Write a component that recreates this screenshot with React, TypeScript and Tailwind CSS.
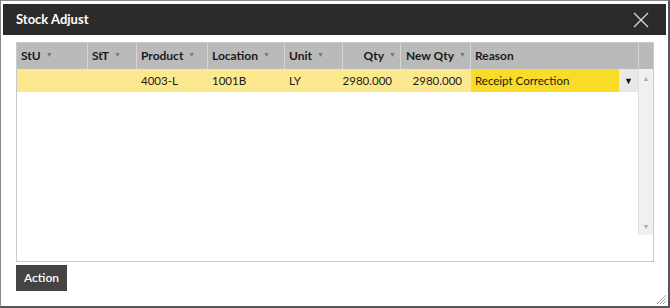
import React from "react";

const cols = [
  { label: "StU", w: 71, align: "left", sort: true },
  { label: "StT", w: 49, align: "left", sort: true },
  { label: "Product", w: 71, align: "left", sort: true },
  { label: "Location", w: 77, align: "left", sort: true },
  { label: "Unit", w: 58, align: "left", sort: true },
  { label: "Qty", w: 58, align: "right", sort: true },
  { label: "New Qty", w: 70, align: "right", sort: true },
  { label: "Reason", w: 168, align: "left", sort: false },
];

const row = ["", "", "4003-L", "1001B", "LY", "2980.000", "2980.000"];

function SortMark() {
  return <span className="ml-[5px] text-[7px] text-[#777] relative top-[-2px]">▼</span>;
}

export default function App() {
  return (
    <div
      className="w-[670px] h-[308px] bg-white border border-[#888] border-r-2 border-b-2 border-r-[#555] border-b-[#555] px-[2px] pt-[3px] flex flex-col relative"
      style={{ fontFamily: "Lato, 'Open Sans', sans-serif" }}
    >
      <div className="h-[31px] bg-[#2b2b2b] flex items-center justify-between pl-[13px] pr-[17px] shrink-0">
        <span className="text-white text-[13px] font-bold">Stock Adjust</span>
        <svg width="16" height="16" viewBox="0 0 16 16">
          <path d="M1 1L15 15M15 1L1 15" stroke="#d6d6d6" strokeWidth="1.4" />
        </svg>
      </div>
      <div className="ml-[13px] mt-[7px] w-[638px] h-[220px] border border-[#c9c9c9] flex flex-col">
        <div className="flex h-[26px] bg-[#bababa] text-[12px] font-bold text-[#1a1a1a]">
          {cols.map((c, i) => (
            <div
              key={i}
              style={{ width: c.w }}
              className={`h-full flex items-center border-r border-[#d6d6d6] px-[4px] ${
                c.align === "right" ? "justify-end pr-[4px]" : ""
              }`}
            >
              <span>{c.label}</span>
              {c.sort && <SortMark />}
            </div>
          ))}
          <div className="flex-1" />
        </div>
        <div className="flex flex-1 min-h-0">
          <div className="flex-1 flex flex-col">
            <div className="flex h-[23px] bg-[#fce98f] text-[11.5px] text-[#1a1a1a]">
              {row.map((v, i) => (
                <div
                  key={i}
                  style={{ width: cols[i].w }}
                  className={`h-full flex items-center px-[4px] ${
                    cols[i].align === "right" ? "justify-end pr-[9px]" : ""
                  }`}
                >
                  {v}
                </div>
              ))}
              <div className="w-[148px] h-full bg-[#f8dc27] flex items-center pl-[4px]">
                Receipt Correction
              </div>
              <div className="w-[19px] h-full bg-[#e8e8e8] flex items-center justify-center text-[9px] text-[#111]">
                ▼
              </div>
            </div>
          </div>
          <div className="w-[15px] h-[166px] bg-[#f0f0f0] border-l border-[#e2e2e2] flex flex-col justify-between items-center py-[4px] text-[7px] text-[#aaa]">
            <span>▲</span>
            <span>▼</span>
          </div>
        </div>
      </div>
      <div className="ml-[13px] mt-[3px]">
        <button className="w-[51px] h-[26px] bg-[#444] text-white text-[12px] font-semibold flex items-center justify-center">
          Action
        </button>
      </div>
      <svg className="absolute right-[1px] bottom-[1px]" width="13" height="13" viewBox="0 0 13 13">
        <path d="M12 3L3 12M12 6L6 12M12 9L9 12" stroke="#999" strokeWidth="0.9" />
      </svg>
    </div>
  );
}
